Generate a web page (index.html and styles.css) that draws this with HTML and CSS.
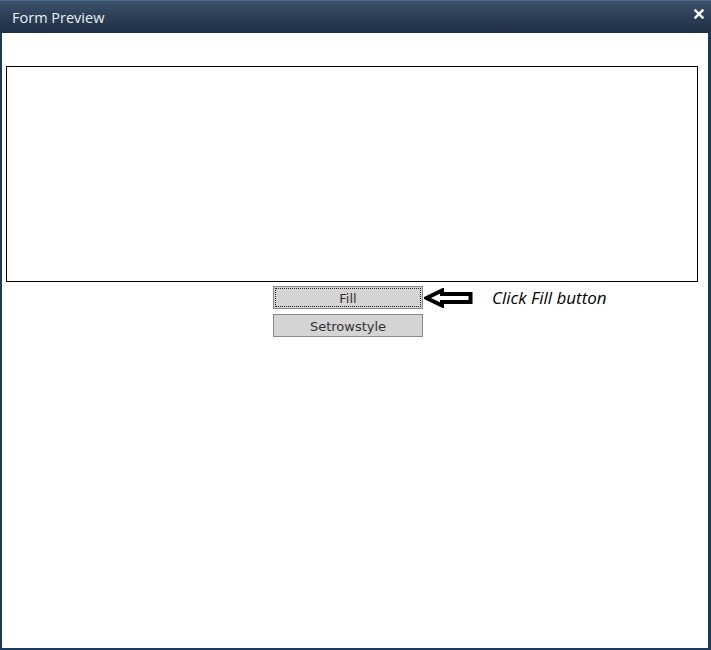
FILE: index.html
```html
<!DOCTYPE html>
<html>
<head>
<meta charset="utf-8">
<link rel="stylesheet" href="styles.css">
</head>
<body>
<div class="window">
  <div class="titlebar">
    <span class="title">Form Preview</span>
    <svg class="close" width="10" height="10" viewBox="0 0 10 10"><path d="M1.5 1.5 L8.5 8.5 M8.5 1.5 L1.5 8.5" stroke="#fff" stroke-width="2.4" stroke-linecap="square"/></svg>
  </div>
  <div class="content">
    <div class="grid"></div>
    <div class="actions">
      <div class="buttons">
        <button class="btn focused">Fill</button>
        <button class="btn">Setrowstyle</button>
      </div>
      <div class="hint">
        <svg class="arrow" width="50" height="20" viewBox="0 0 50 20"><path d="M2.5 10 L18 2.5 L18 6 L46.5 6 L46.5 14 L18 14 L18 17.5 Z" fill="#fff" stroke="#000" stroke-width="4" stroke-linejoin="miter"/></svg>
        <span class="hint-text">Click Fill button</span>
      </div>
    </div>
  </div>
</div>
</body>
</html>
```
FILE: styles.css
```css
html, body {
  margin: 0;
  padding: 0;
  background: #fff;
}
.window {
  width: 711px;
  height: 650px;
  box-sizing: border-box;
  border-left: 2px solid #1d3a5c;
  border-right: 3px solid #1d3a5c;
  border-bottom: 2px solid #1d3a5c;
  display: flex;
  flex-direction: column;
  background: #fff;
}
.titlebar {
  height: 33px;
  box-sizing: border-box;
  flex: none;
  background: linear-gradient(to bottom, #3d536b 0%, #2c4058 45%, #1f3046 100%);
  display: flex;
  align-items: center;
  justify-content: space-between;
  padding: 0 7px 0 12px;
  margin-left: -2px;
  margin-right: -3px;
  border-top: 1px solid #4a6a8e;
}
.title {
  font-family: "Open Sans", "DejaVu Sans", sans-serif;
  font-size: 14.5px;
  color: #e8eef4;
}
.close {
  align-self: flex-start;
  margin-top: 8px;
}
.content {
  padding: 33px 10px 0 4px;
}
.grid {
  height: 214px;
  border: 1px solid #000;
}
.actions {
  display: flex;
  align-items: flex-start;
  margin-top: 4px;
  padding-left: 267px;
}
.buttons {
  display: flex;
  flex-direction: column;
  gap: 5px;
}
.btn {
  width: 150px;
  height: 23px;
  margin: 0;
  padding: 1px 0 0;
  background: #d4d4d4;
  border: 1px solid #8a8a8a;
  font-family: "DejaVu Sans", Verdana, sans-serif;
  font-size: 13px;
  color: #333;
  text-align: center;
}
.btn.focused {
  outline: 1px dotted #222;
  outline-offset: -3px;
}
.hint {
  display: flex;
  align-items: center;
  margin-left: 1px;
  height: 23px;
}
.arrow {
  display: block;
}
.hint-text {
  font-family: "Open Sans", sans-serif;
  font-style: italic;
  font-size: 17px;
  color: #000;
  margin-left: 18px;
  margin-top: -1px;
}
```
